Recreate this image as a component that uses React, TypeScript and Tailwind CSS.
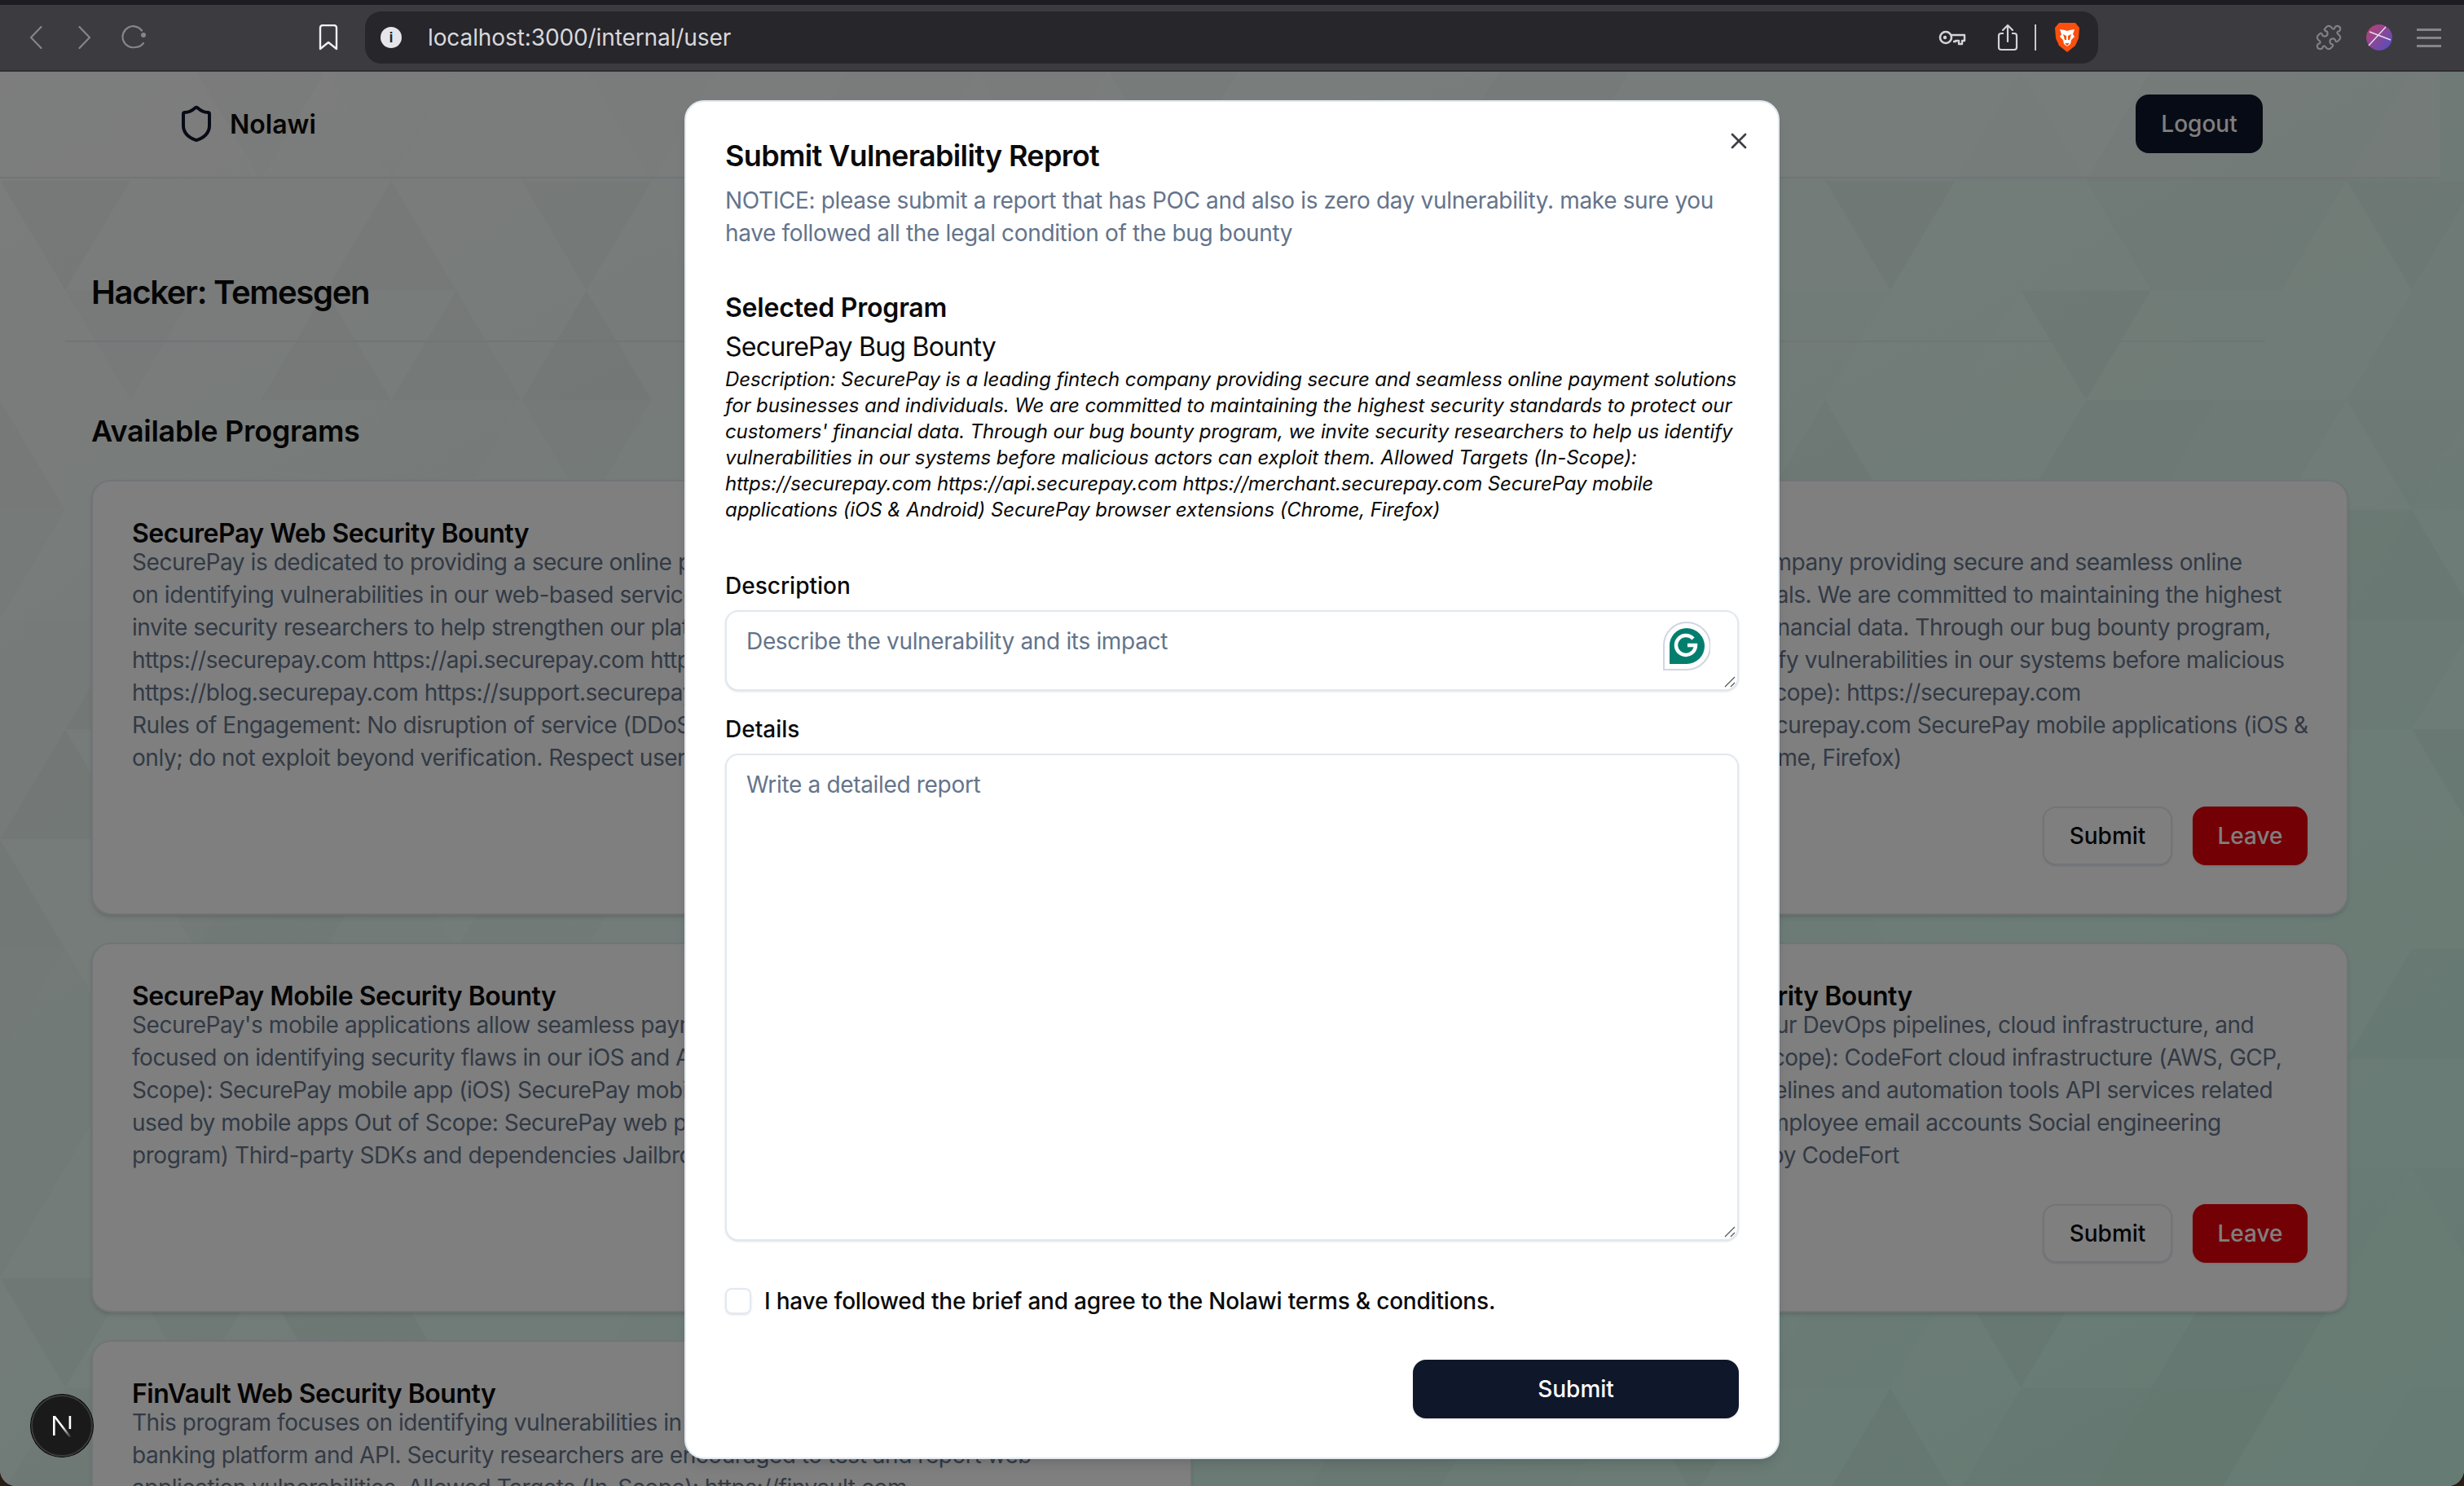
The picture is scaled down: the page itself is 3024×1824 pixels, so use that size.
import React from 'react';
import { Shield, X, Puzzle } from 'lucide-react';

const webLines = [
  'SecurePay is dedicated to providing a secure online payment experience. This program is focused',
  'on identifying vulnerabilities in our web-based services and customer portals. We',
  'invite security researchers to help strengthen our platform. Allowed Targets (In-Scope):',
  'https://securepay.com https://api.securepay.com https://merchant.securepay.com',
  'https://blog.securepay.com https://support.securepay.com Out of Scope: Third-party services',
  'Rules of Engagement: No disruption of service (DDoS); use test accounts',
  'only; do not exploit beyond verification. Respect user privacy at all times.',
];

const bugBountyLines = [
  'Description: SecurePay is a leading fintech company providing secure and seamless online',
  'payment solutions for businesses and individuals. We are committed to maintaining the highest',
  "security standards to protect our customers' financial data. Through our bug bounty program,",
  'we invite security researchers to help us identify vulnerabilities in our systems before malicious',
  'actors can exploit them. Allowed Targets (In-Scope): https://securepay.com',
  'https://api.securepay.com https://merchant.securepay.com SecurePay mobile applications (iOS &',
  'Android) SecurePay browser extensions (Chrome, Firefox)',
];

const mobileLines = [
  "SecurePay's mobile applications allow seamless payments on the go. This program is",
  'focused on identifying security flaws in our iOS and Android applications. Allowed Targets (In-',
  'Scope): SecurePay mobile app (iOS) SecurePay mobile app (Android) Backend APIs',
  'used by mobile apps Out of Scope: SecurePay web platform (covered by another',
  'program) Third-party SDKs and dependencies Jailbroken or rooted devices',
];

const devopsLines = [
  'CodeFort also invites hackers to help secure our DevOps pipelines, cloud infrastructure, and',
  'deployed web services. Allowed Targets (In-Scope): CodeFort cloud infrastructure (AWS, GCP,',
  'Azure, plus on-premises resources) CI/CD pipelines and automation tools API services related',
  'to deployment tool Out of Scope: Corporate Employee email accounts Social engineering',
  'attacks on Third-party services not managed by CodeFort',
];

const finvaultLines = [
  'This program focuses on identifying vulnerabilities in the FinVault online',
  'banking platform and API. Security researchers are encouraged to test and report web',
  'application vulnerabilities. Allowed Targets (In-Scope): https://finvault.com',
];

// seeded triangles for the page background
const triangles = (() => {
  const out: { points: string; fill: string; opacity: number }[] = [];
  const w = 160;
  const h = 134.7;
  let seed = 17;
  const rand = () => {
    seed = (seed * 9301 + 49297) % 233280;
    return seed / 233280;
  };
  for (let r = 0; r < 14; r++) {
    const y = 87 + r * h;
    const off = r % 2 === 0 ? 0 : w / 2;
    for (let c = -1; c < 21; c++) {
      const x = c * w + off;
      const a = rand();
      const b = rand();
      out.push({
        points: `${x},${y + h} ${x + w / 2},${y} ${x + w},${y + h}`,
        fill: a > 0.5 ? '#000' : '#fff',
        opacity: a > 0.5 ? 0.005 + b * 0.025 : 0.01 + b * 0.03,
      });
      const d = rand();
      out.push({
        points: `${x + w / 2},${y} ${x + w},${y + h} ${x + (w * 3) / 2},${y}`,
        fill: d > 0.5 ? '#000' : '#fff',
        opacity: d > 0.5 ? 0.005 + b * 0.025 : 0.01 + d * 0.03,
      });
    }
  }
  return out;
})();

const BrowserChrome = () => (
  <div className="h-[88px] shrink-0 bg-[#3b3b40] border-t-[6px] border-t-[#1c1c22] border-b-2 border-b-[#2e2e33] flex items-center relative z-30">
    <div className="flex items-center w-full h-[64px]">
      <svg width="16" height="28" viewBox="0 0 16 28" fill="none" className="ml-[36px] text-[#85858a]">
        <path d="M14.5 1L2 14l12.5 13" stroke="currentColor" strokeWidth="2.2" strokeLinecap="round" strokeLinejoin="round" />
      </svg>
      <svg width="16" height="28" viewBox="0 0 16 28" fill="none" className="ml-[44px] text-[#85858a]">
        <path d="M1.5 1L14 14 1.5 27" stroke="currentColor" strokeWidth="2.2" strokeLinecap="round" strokeLinejoin="round" />
      </svg>
      <svg width="32" height="32" viewBox="0 0 32 32" fill="none" className="ml-[37px] text-[#85858a]">
        <path d="M24 8.5A13 13 0 1 0 16 29a13 13 0 0 0 10-5" stroke="currentColor" strokeWidth="2.2" strokeLinecap="round" transform="translate(1 -1)" />
        <circle cx="27" cy="13" r="3" fill="currentColor" />
      </svg>
      <svg width="24" height="32" viewBox="0 0 24 32" fill="none" className="ml-[210px] text-[#f0f0f2]">
        <path d="M2 4a3 3 0 0 1 3-3h14a3 3 0 0 1 3 3v26l-10-8-10 8z" stroke="currentColor" strokeWidth="2.4" strokeLinejoin="round" />
      </svg>
      <div className="ml-[33px] h-[64px] w-[2127px] rounded-[20px] bg-[#26262b] flex items-center">
        <div className="ml-[19px] w-[26px] h-[26px] rounded-full bg-[#e6e6ea] flex items-center justify-center text-[#26262b] text-[18px] font-bold font-['Liberation_Sans',sans-serif]">
          i
        </div>
        <span className="ml-[32px] text-[28px] tracking-[-0.1px] text-[#d8d8dc] font-['Inter',sans-serif]">localhost:3000/internal/user</span>
        <div className="ml-auto flex items-center">
          <svg width="34" height="20" viewBox="0 0 34 20" fill="none" className="text-[#d4d4d8]">
            <circle cx="9" cy="10" r="7" stroke="currentColor" strokeWidth="2.6" />
            <circle cx="8" cy="10" r="2.2" fill="currentColor" />
            <path d="M16 7h16v7h-3v4h-4v-4h-4v1h-3" stroke="currentColor" strokeWidth="2.4" strokeLinejoin="round" />
          </svg>
          <svg width="26" height="34" viewBox="0 0 26 34" fill="none" className="ml-[38px] text-[#d4d4d8]">
            <path d="M13 22V2M7 8l6-6 6 6" stroke="currentColor" strokeWidth="2.2" strokeLinecap="round" strokeLinejoin="round" />
            <path d="M8 12H5a3 3 0 0 0-3 3v14a3 3 0 0 0 3 3h16a3 3 0 0 0 3-3V15a3 3 0 0 0-3-3h-3" stroke="currentColor" strokeWidth="2.2" />
          </svg>
          <div className="ml-[20px] w-[2px] h-[32px] bg-[#c8c8cc]" />
          <svg width="32" height="36" viewBox="0 0 32 36" className="ml-[22px] mr-[22px]">
            <path d="M6 0h20l5 6-1 13-4 9-10 8-10-8-4-9L1 6z" fill="#f9500f" />
            <path d="M7 8l6 1 3 1 3-1 6-1-2 6 2 3-4 4-1 5-4 3-4-3-1-5-4-4 2-3z" fill="#fff" />
            <path d="M11 14l4 2v5h-2zM21 14l-4 2v5h2zM13 25h6l-3 3z" fill="#f9500f" />
          </svg>
        </div>
      </div>
      <Puzzle size={34} strokeWidth={1.5} className="ml-[266px] text-[#808085]" />
      <svg width="32" height="32" viewBox="0 0 32 32" className="ml-[29px]">
        <defs>
          <linearGradient id="avatar" x1="0" y1="0" x2="1" y2="1">
            <stop offset="0" stopColor="#c23f6e" />
            <stop offset="1" stopColor="#4c4fc4" />
          </linearGradient>
        </defs>
        <circle cx="16" cy="16" r="16" fill="url(#avatar)" />
        <path d="M4 9l26 10M3 26L24 3" stroke="#e5dfe8" strokeWidth="1.4" />
      </svg>
      <div className="ml-[30px] w-[30px] flex flex-col gap-[7px]">
        <div className="h-[3px] bg-[#85858a]" />
        <div className="h-[3px] bg-[#85858a]" />
        <div className="h-[3px] bg-[#85858a]" />
      </div>
    </div>
  </div>
);

const ProgramCard = ({ title, lines, actions }: { title: string; lines: string[]; actions?: boolean }) => (
  <div className="rounded-[24px] border-2 border-[#e2e8f0] bg-white shadow-md p-[48px] pb-[59px] overflow-hidden">
    <h3 className="text-[32px] leading-[31px] tracking-[-0.47px] font-semibold text-[#0a0a0a] whitespace-nowrap">{title}</h3>
    <div className="text-[28px] leading-[40px] tracking-[-0.45px] text-[#64748b]">
      {lines.map((l, i) => (
        <div key={i} className="whitespace-nowrap">
          {l}
        </div>
      ))}
    </div>
    <div className={`mt-[40px] flex justify-end gap-[25px] h-[72px] ${actions ? '' : 'invisible'}`}>
      <button className="w-[159px] rounded-[16px] border-2 border-[#e2e8f0] bg-white text-[28px] font-medium text-[#0a0a0a] shadow-sm">
        Submit
      </button>
      <button className="w-[141px] rounded-[16px] bg-[#e7000b] text-[28px] font-medium text-white shadow-sm">Leave</button>
    </div>
  </div>
);

const Page = () => (
  <div className="relative flex-1 min-h-0 overflow-hidden bg-gradient-to-br from-[#f8f8f8] to-[#ccf8e8]">
    <svg className="absolute inset-0 pointer-events-none" width="3024" height="1736" viewBox="0 88 3024 1736">
      {triangles.map((t, i) => (
        <polygon key={i} points={t.points} fill={t.fill} opacity={t.opacity} />
      ))}
    </svg>
    <div className="relative">
      <nav className="h-[131px] w-[2994px] bg-white/30 border-b-2 border-[#e2e8f0] flex items-center pl-[217px] pr-[217px] pb-[2px]">
        <Shield size={48} strokeWidth={2} className="text-[#0f172a]" />
        <span className="ml-[17px] mt-[2px] text-[32px] font-semibold text-[#0a0a0a]">Nolawi</span>
        <button className="ml-auto w-[156px] h-[72px] rounded-[16px] bg-[#0f172a] text-white text-[28px] font-medium">Logout</button>
      </nav>
      <main className="pt-[116px]">
        <div className="mx-[80px] w-[2700px] border-b-2 border-[#e2e8f0] pl-[32px] pb-[35px]">
          <h1 className="text-[40px] leading-[48px] tracking-[-1.3px] font-semibold text-[#0a0a0a]">Hacker: Temesgen</h1>
        </div>
        <h2 className="ml-[112px] mt-[85px] text-[36px] leading-[48px] tracking-[-0.3px] font-semibold text-[#0a0a0a]">Available Programs</h2>
        <div className="ml-[112px] mt-[36px] w-[2770px] grid grid-cols-[1351px_1344px] gap-x-[75px] gap-y-[34px]">
          <ProgramCard title="SecurePay Web Security Bounty" lines={webLines} />
          <ProgramCard title="SecurePay Bug Bounty" lines={bugBountyLines} actions />
          <ProgramCard title="SecurePay Mobile Security Bounty" lines={mobileLines} />
          <ProgramCard title="CodeFort Cloud Infrastructure API Security Bounty" lines={devopsLines} actions />
          <ProgramCard title="FinVault Web Security Bounty" lines={finvaultLines} />
        </div>
      </main>
    </div>
  </div>
);

const GrammarlyBadge = () => (
  <svg width="58" height="60" viewBox="0 0 58 60" className="absolute right-[35px] top-[14px]">
    <path d="M29 1a28 28 0 0 1 0 58H1V29A28 28 0 0 1 29 1z" fill="#fff" stroke="#d2d6e2" strokeWidth="2" />
    <path d="M29 8a21 21 0 0 1 0 44H8V29A21 21 0 0 1 29 8z" fill="#027e6f" />
    <path d="M37 21a12 12 0 1 0 3 8h-10" fill="none" stroke="#fff" strokeWidth="4.5" />
  </svg>
);

const ResizeGrip = () => (
  <svg width="16" height="16" viewBox="0 0 16 16" className="absolute right-[3px] bottom-[3px] pointer-events-none">
    <path d="M2 14L14 2M9 14l5-5" stroke="#55555a" strokeWidth="1.2" />
  </svg>
);

const inputClass =
  'block w-full resize-none rounded-[16px] border-2 border-[#e2e8f0] bg-white px-[24px] py-[16px] text-[28px] leading-[40px] tracking-[-0.33px] shadow-sm outline-none placeholder:text-[#64748b]';

const ReportModal = () => (
  <div className="absolute left-[840px] top-[123px] w-[1344px] h-[1668px] rounded-[24px] border-2 border-[#e2e8f0] bg-white p-[48px] shadow-lg z-20">
    <button className="absolute right-[32px] top-[32px] text-[#3f3f46]">
      <X size={32} strokeWidth={2} />
    </button>
    <h2 className="text-[36px] leading-[36px] tracking-[-0.65px] font-semibold text-[#0a0a0a]">Submit Vulnerability Reprot</h2>
    <p className="mt-[17px] text-[28px] leading-[40px] tracking-[-0.35px] text-[#64748b]">
      NOTICE: please submit a report that has POC and also is zero day vulnerability. make sure you have followed all the legal condition of the bug bounty
    </p>
    <h3 className="mt-[52px] text-[32px] leading-[40px] tracking-[-0.2px] font-semibold text-[#0a0a0a]">Selected Program</h3>
    <p className="mt-[8px] text-[32px] leading-[40px] tracking-[-0.75px] text-[#0a0a0a]">SecurePay Bug Bounty</p>
    <p className="mt-[4px] text-[24px] leading-[32px] tracking-[-0.1px] italic text-[#0a0a0a]">
      Description: SecurePay is a leading fintech company providing secure and seamless online payment solutions for businesses and individuals. We are committed to maintaining the highest security standards to protect our customers' financial data. Through our bug bounty program, we invite security researchers to help us identify vulnerabilities in our systems before malicious actors can exploit them. Allowed Targets (In-Scope): https://securepay.com https://api.securepay.com https://merchant.securepay.com SecurePay mobile applications (iOS & Android) SecurePay browser extensions (Chrome, Firefox)
    </p>
    <label className="block mt-[63px] text-[28px] leading-[28px] font-medium text-[#0a0a0a]">Description</label>
    <div className="relative mt-[16px]">
      <textarea rows={1} placeholder="Describe the vulnerability and its impact" className={`${inputClass} h-[99px]`} />
      <GrammarlyBadge />
      <ResizeGrip />
    </div>
    <label className="block mt-[33px] text-[28px] leading-[28px] font-medium text-[#0a0a0a]">Details</label>
    <div className="relative mt-[16px]">
      <textarea placeholder="Write a detailed report" className={`${inputClass} h-[598px]`} />
      <ResizeGrip />
    </div>
    <div className="mt-[58px] flex items-center gap-[16px]">
      <div className="w-[32px] h-[32px] rounded-[8px] border-2 border-[#e2e8f0] shadow-sm" />
      <span className="text-[28px] leading-[32px] tracking-[-0.2px] font-medium text-[#0a0a0a]">
        I have followed the brief and agree to the Nolawi terms &amp; conditions.
      </span>
    </div>
    <div className="mt-[56px] flex justify-end">
      <button className="w-[400px] h-[72px] rounded-[16px] bg-[#0f172a] text-white text-[28px] font-medium shadow-sm">Submit</button>
    </div>
  </div>
);

const NextBadge = () => (
  <div className="absolute left-[38px] bottom-[36px] w-[76px] h-[76px] rounded-full bg-[#1a1a1a] border-2 border-[#3a3a3a] shadow-[0_0_0_1px_#000] flex items-center justify-center z-30">
    <svg width="32" height="32" viewBox="0 0 32 32" fill="none">
      <defs>
        <linearGradient id="nextN" x1="0" y1="0" x2="1" y2="1">
          <stop offset="0.5" stopColor="#fff" />
          <stop offset="1" stopColor="#fff" stopOpacity="0" />
        </linearGradient>
      </defs>
      <path d="M5 4h2.6v24H5z" fill="#fff" />
      <path d="M24.6 4h2.6v16h-2.6z" fill="#fff" />
      <path d="M5 4h3l20 26h-3.4z" fill="url(#nextN)" />
    </svg>
  </div>
);

export default function App() {
  return (
    <div className="relative w-[3024px] h-[1824px] overflow-hidden bg-[#2a1d16] font-['Inter',sans-serif]">
      <div className="w-full h-full flex flex-col rounded-b-[20px] overflow-hidden">
        <BrowserChrome />
        <Page />
      </div>
      <div className="absolute inset-x-0 top-[88px] bottom-0 bg-black/50 rounded-b-[20px] z-10" />
      <ReportModal />
      <NextBadge />
    </div>
  );
}
